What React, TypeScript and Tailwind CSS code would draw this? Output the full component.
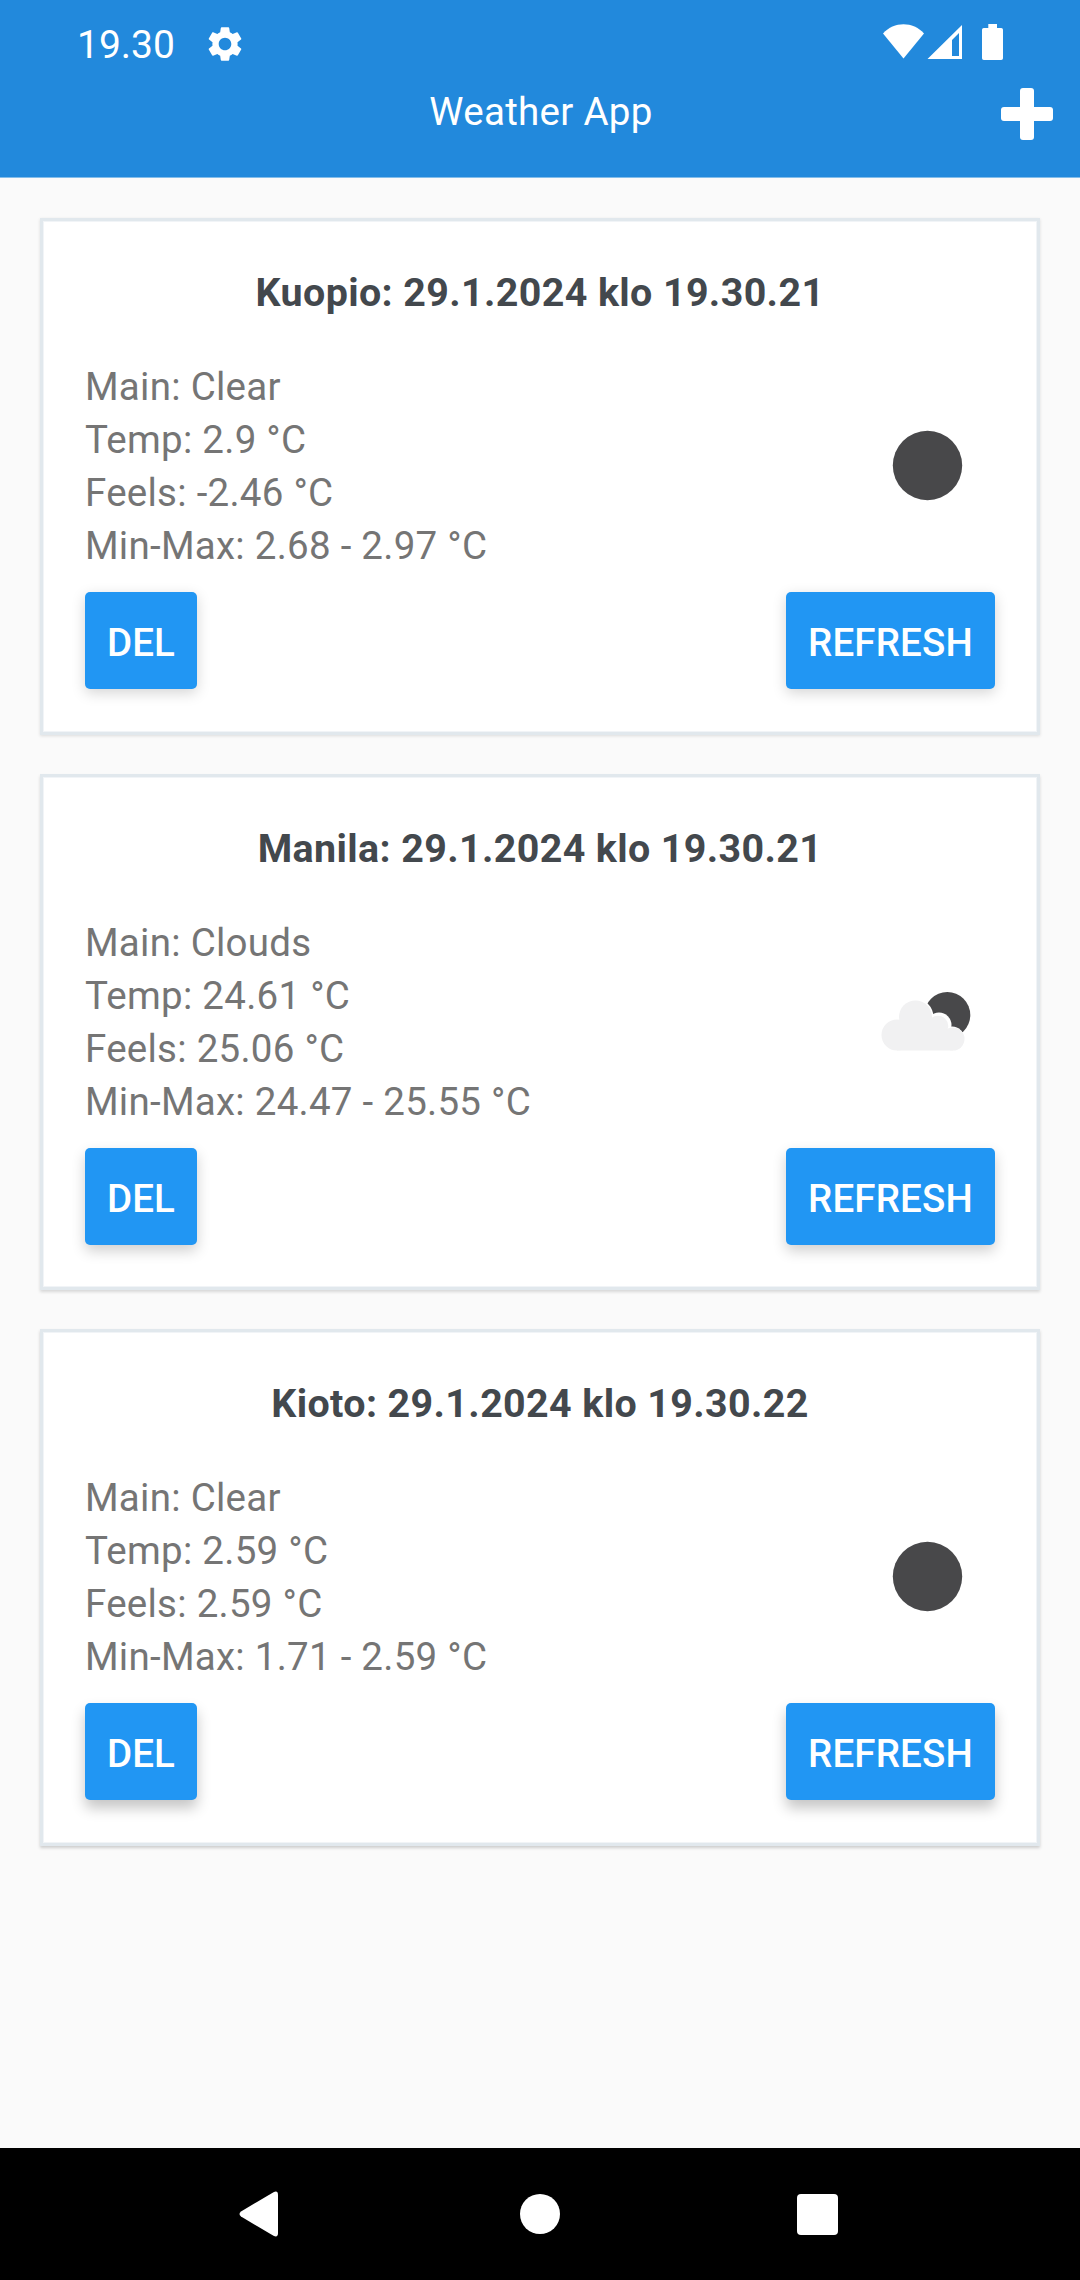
import { MdSettings } from "react-icons/md";

type Reading = {
  city: string;
  time: string;
  main: string;
  temp: string;
  feels: string;
  range: string;
  icon: "clear" | "clouds";
  frame: string;
  buttonShadow: string;
};

const readings: Reading[] = [
  {
    city: "Kuopio",
    time: "29.1.2024 klo 19.30.21",
    main: "Clear",
    temp: "2.9",
    feels: "-2.46",
    range: "2.68 - 2.97",
    icon: "clear",
    frame: "h-[517px] shadow-[inset_0_0_0_1px_#f1f4f7,0_1px_3px_rgba(0,0,0,0.12)]",
    buttonShadow: "shadow-[0_4px_14px_rgba(0,0,0,0.17)]",
  },
  {
    city: "Manila",
    time: "29.1.2024 klo 19.30.21",
    main: "Clouds",
    temp: "24.61",
    feels: "25.06",
    range: "24.47 - 25.55",
    icon: "clouds",
    frame: "h-[516px] shadow-[inset_0_0_0_1px_#f1f4f7,0_2px_3px_rgba(0,0,0,0.14)]",
    buttonShadow: "shadow-[0_6px_14px_rgba(0,0,0,0.19)]",
  },
  {
    city: "Kioto",
    time: "29.1.2024 klo 19.30.22",
    main: "Clear",
    temp: "2.59",
    feels: "2.59",
    range: "1.71 - 2.59",
    icon: "clear",
    frame: "h-[517px] shadow-[inset_0_0_0_1px_#f1f4f7,0_2px_3px_rgba(0,0,0,0.18)]",
    buttonShadow: "shadow-[0_8px_14px_rgba(0,0,0,0.23)]",
  },
];

function WeatherIcon({ kind }: { kind: Reading["icon"] }) {
  return (
    <svg className="size-[138px]" viewBox="0 0 138 138">
      {kind === "clear" ? (
        <circle cx="70.5" cy="69.5" r="34.7" fill="#48484a" />
      ) : (
        <>
          <circle cx="90.3" cy="63" r="23" fill="#48484a" />
          <g fill="#fff">
            <circle cx="58" cy="65" r="18.500" />
            <circle cx="82" cy="73" r="12.500" />
            <circle cx="95" cy="87" r="12.500" />
            <path d="M50 60h22l12 14 14 14v10H50z" />
          </g>
          <g fill="#f1f1f2">
            <circle cx="40" cy="83" r="15.500" />
            <circle cx="58.500" cy="65" r="16.500" />
            <circle cx="81" cy="74" r="10.300" />
            <circle cx="96" cy="87" r="11.500" />
            <path d="M40 75l10-8h20l12 8 14 6v17.500H40z" />
          </g>
        </>
      )}
    </svg>
  );
}

function ActionButton({ label, shape, shadow }: { label: string; shape: string; shadow: string }) {
  return (
    <button
      className={`flex h-[97px] items-center justify-center rounded-[5px] bg-[#2196f3] pt-[5px] text-[38.5px] leading-[58px] font-medium tracking-[0.15px] text-white ${shape} ${shadow}`}
    >
      {label}
    </button>
  );
}

function WeatherCard({ reading }: { reading: Reading }) {
  return (
    <section className={`border-[3px] border-[#e1e8ed] bg-white px-[42px] pt-[45px] ${reading.frame}`}>
      <h2 className="text-center text-[39.4px] leading-[53px] font-bold tracking-[0.38px] text-[#43484d]">
        {reading.city}: {reading.time}
      </h2>
      <div className="mt-[41px] flex justify-between">
        <div className="text-[38.5px] leading-[53px] tracking-[0.26px] whitespace-nowrap text-[#757575]">
          <p>Main: {reading.main}</p>
          <p>Temp: {reading.temp} °C</p>
          <p>Feels: {reading.feels} °C</p>
          <p>Min-Max: {reading.range} °C</p>
        </div>
        <div className="mt-9 -mb-9 h-[138px]">
          <WeatherIcon kind={reading.icon} />
        </div>
      </div>
      <div className="mt-5 flex justify-between">
        <ActionButton label="DEL" shape="w-[112px]" shadow={reading.buttonShadow} />
        <ActionButton label="REFRESH" shape="w-[209px]" shadow={reading.buttonShadow} />
      </div>
    </section>
  );
}

export default function App() {
  return (
    <div className="flex h-[2280px] w-[1080px] flex-col bg-[#fafafa] font-['Roboto',sans-serif]">
      <header className="h-[178px] border-b border-[#83bdea] bg-[#2289dc] text-white">
        <div className="flex h-[84px] items-center justify-between pr-[76px] pl-[77px]">
          <div className="flex items-center gap-[26.5px]">
            <span className="w-[100px] pt-[5px] text-[39px] leading-[46px]">19.30</span>
            <MdSettings className="mt-[3px] size-[42px]" />
          </div>
          <svg className="h-9 w-[122px]" viewBox="0 0 122 36" fill="currentColor">
            <path d="M1 9.500C12-2.700 31-2.700 42 9.500L21.500 34.500z" />
            <path d="M80 1v34H45.500zM77 9l-7 7v16h7z" fillRule="evenodd" />
            <path d="M106.300 0h8.700v4h4.200q1.800 0 1.800 1.800v28.400q0 1.800-1.800 1.800h-17.400q-1.800 0-1.800-1.800V5.800q0-1.800 1.800-1.800h4.500z" />
          </svg>
        </div>
        <div className="grid h-[60px] grid-cols-3 items-center px-[27px]">
          <h1 className="col-start-2 -mt-[5px] pl-[2px] text-center text-[38.5px] leading-[54px] tracking-[0.3px]">
            Weather App
          </h1>
          <svg className="h-[52px] w-[52px] justify-self-end" viewBox="0 0 52 52" fill="currentColor">
            <rect x="19" width="14" height="52" rx="3" />
            <rect y="19" width="52" height="14" rx="3" />
          </svg>
        </div>
      </header>
      <main className="flex flex-1 flex-col px-10 pt-10">
        <WeatherCard reading={readings[0]} />
        <div className="h-[39px]" />
        <WeatherCard reading={readings[1]} />
        <div className="h-[39px]" />
        <WeatherCard reading={readings[2]} />
      </main>
      <nav className="flex h-[132px] items-center justify-between bg-black pr-[242px] pl-[239px]">
        <svg className="h-[46px] w-[39px]" viewBox="0 0 39 46" fill="white">
          <path d="M2 20.500L34.500 1.200Q39-1 39 4v38q0 5-4.500 2.800L2 25.500Q-1 23 2 20.500z" />
        </svg>
        <span className="ml-[5px] size-10 rounded-full bg-white" />
        <span className="size-[41px] rounded-[4px] bg-white" />
      </nav>
    </div>
  );
}
